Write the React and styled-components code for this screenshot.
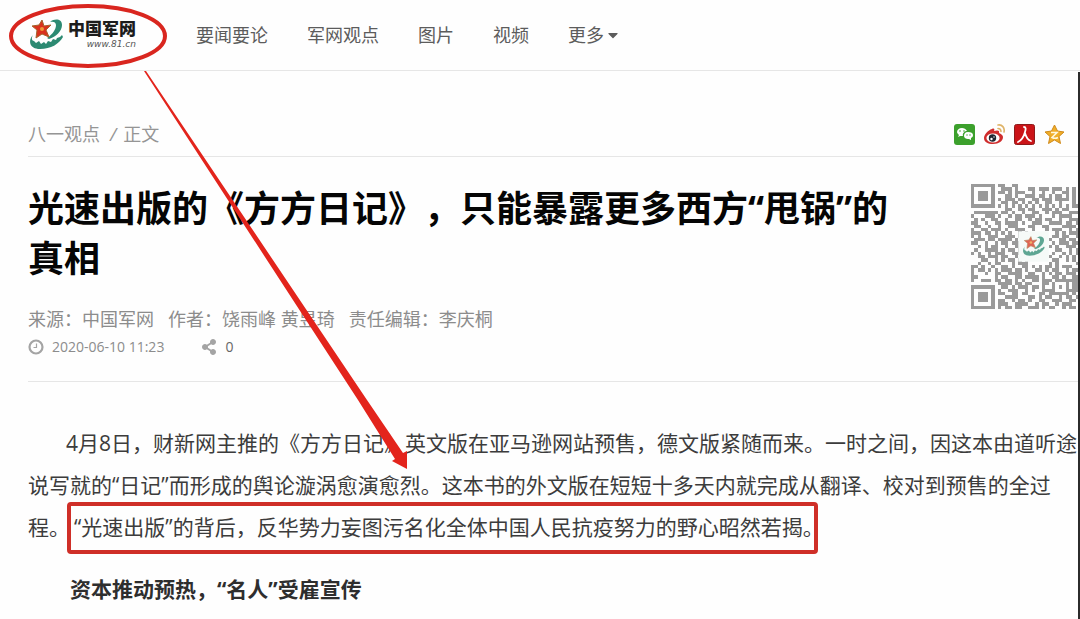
import React from "react";
import styled, { createGlobalStyle } from "styled-components";
import { FaShareAlt, FaCaretDown } from "react-icons/fa";

const GlobalStyle = createGlobalStyle`
    * {
        box-sizing: border-box;
    }
    body {
        margin: 0;
        background: #fefefe;
        color: #3c3c3c;
        font-family: "Open Sans", "Noto Sans CJK SC", sans-serif;
        text-spacing-trim: space-all;
        overflow-x: hidden;
    }
    a {
        color: inherit;
        text-decoration: none;
    }
    svg {
        display: block;
    }
`;

// dark window edge lies over the right side of the page, under the header
const Page = styled.div`
    position: relative;
    min-height: 100vh;
    &::after {
        content: "";
        position: absolute;
        top: 72px;
        right: 0;
        bottom: 0;
        width: 2px;
        background: #2b2b2b;
    }
`;

// HEADER

const Header = styled.header`
    display: flex;
    align-items: center;
    height: 71px;
    padding-left: 28px;
    border-bottom: 1px solid #e6e6e6;
`;

const Logo = styled.a`
    display: flex;
    align-items: center;
    gap: 4px;
    width: 168px;
`;

const LogoText = styled.div`
    display: flex;
    flex-flow: column nowrap;
    align-items: flex-end;
    strong {
        color: #1c1c1c;
        font-size: 17px;
        line-height: 18px;
        font-weight: 900;
    }
    em {
        color: #555;
        font-family: "DejaVu Sans", sans-serif;
        font-size: 9px;
        line-height: 12px;
    }
`;

const Nav = styled.nav`
    display: flex;
    gap: 39px;
    color: #5c5c5c;
    font-size: 18px;
    line-height: 28px;
    white-space: nowrap;
`;

const MoreButton = styled.button`
    display: flex;
    align-items: center;
    gap: 2px;
    padding: 0;
    border: 0;
    background: none;
    color: inherit;
    font: inherit;
    svg {
        width: 14px;
        height: 16px;
    }
`;

// ARTICLE

const Main = styled.main`
    margin-top: 1px;
    padding-left: 28px;
`;

const TopBar = styled.div`
    display: flex;
    align-items: flex-end;
    justify-content: space-between;
    height: 85px;
    padding: 0 15px 8px 0;
    border-bottom: 1px solid #e6e6e6;
`;

const Crumbs = styled.div`
    display: flex;
    gap: 10px;
    color: #959595;
    font-size: 18px;
    line-height: 28px;
    span {
        display: flex;
        gap: 7px;
    }
`;

const ShareList = styled.div`
    display: flex;
    gap: 9px;
    padding-bottom: 3px;
    svg {
        width: 21px;
        height: 21px;
    }
`;

const Intro = styled.section`
    display: flex;
    gap: 60px;
    padding: 27px 0 20px;
    border-bottom: 1px solid #e6e6e6;
`;

const Heading = styled.div`
    flex: 1;
    min-width: 0;
`;

const Title = styled.h1`
    margin: 0;
    color: #050505;
    font-size: 36px;
    line-height: 50px;
    font-weight: bold;
`;

const Meta = styled.div`
    display: flex;
    gap: 14px;
    margin-top: 21px;
    color: #8c8c8c;
    font-size: 18px;
    line-height: 28px;
`;

const Stats = styled.div`
    display: flex;
    align-items: center;
    gap: 37px;
    color: #8c8c8c;
    font-size: 14px;
    line-height: 28px;
    span {
        display: flex;
        align-items: center;
        gap: 8px;
    }
    svg {
        width: 16px;
        height: 16px;
        color: #a4a4a4;
    }
    b {
        color: #666;
        font-weight: normal;
    }
`;

const QrBox = styled.div`
    width: 109px;
    overflow: hidden;
    > svg {
        width: 125px;
        height: 125px;
    }
`;

const Body = styled.article`
    padding-top: 40px;
    font-size: 21px;
    line-height: 42px;
    p {
        margin: 0 0 20px;
        text-indent: 38px;
    }
    h2 {
        margin: 0;
        color: #2e2e2e;
        font-size: 21px;
        font-weight: bold;
        text-indent: 42px;
    }
`;

const Marked = styled.span`
    position: relative;
    padding-left: 4px;
    white-space: nowrap;
    &::after {
        content: "";
        position: absolute;
        inset: -11px 6px -13px -3px;
        border: 4px solid #cf2f28;
        border-radius: 4px;
    }
`;

const Annotation = styled.svg`
    position: absolute;
    top: 0;
    left: 0;
    width: 420px;
    height: 480px;
    pointer-events: none;
`;

const qrRows = [
    "#######.##..##..................######",
    "#.....#..###.#...##.###.###.#.#.....#",
    "#.###.#.##.#.###..#..#..#..##.#.###.#",
    "#.###.#...##.#..###.##.#.##.#.#.###.#",
    "#.###.#.#.###.##..##.###.####.#.###.#",
    "#.....#..##.##.#.#.#..##..#...#.....#",
    "#######.#.#.#.#.#.#.#.#.#.#.#.#######",
    "..........##..##.##..###.#.##........",
    ".#######.##.#..#..##..#.###..###.#.#.",
    "#...###.#..#.##.###.#...#.####..#.##.",
    ".#.#..##..#..##..#.##.##..#..###..#..",
    "##..#..##.####.#..###..####.##.#.##.#",
    ".##..#..#..###...##..##....####.#..#.",
    "#..##.###.#..###..#...#.###..#.##.#.#",
    "###.##.#.#.#..#.#........#.#.###..##.",
    "#.#..###..###.#.........##.##..##.#.#",
    ".###.##.####.#.........#..##.##.#.##.",
    "##..#..#.##.###.........#.###.##.#..#",
    "..#.#.##..#..##........#.#..###..##.#",
    ".#..####.#.##.#..........##..#.#.#.#.",
    "#.#..#.###..###.........#..#.#.#.###.",
    "..##.###.##..#.........#..#.#.#.##..#",
    "...##..#.#.##.#.#.......##..#.#..#.#.",
    "..#..#.##...#.###......#.#.....##.##.",
    "##.#..#..##.#..##.#.#.##.#.###..#..#.",
    "#.##.#.#.###.##.#..##.#.##..#.##.##.#",
    "#...#..##..####..##..#.#.##.###..#...",
    "##.....#.##..##.####.#..##.#..##.###.",
    "#..###.##.##.#.#..##.###.#######.#.#.",
    "........####.##.##...##.#...#.##..##.",
    "#######..##.#.###.##.#..#.#.#.###.#.#",
    "#.....#.#..###..#.#..####...####..#..",
    "#.###.#.##..##.##...##.######.#.##.#.",
    "#.###.#...####...##.#.##..#.##.#..##.",
    "#.###.#.##..#.##.#..##..###..##.#.#..",
    "#.....#.###..####..#.##..#.###..##.#.",
    "#######.#.##.##..###.#.##..#.##.#.##.",
];

const qrPath = qrRows
    .map((row, y) => row.slice(0, 37).split("").map((c, x) => (c === "#" ? `M${x} ${y}h1v1h-1z` : "")).join(""))
    .join("");

const Emblem = () => (
    <>
        <path fill="#2c8a72" d="M22 4c5-4 12-3 12 3 0 6-6 12-13 14l-2-1c6-4 9-9 9-13 0-3-3-4-6-3z" />
        <path fill="#2c8a72" d="M5 17c-5 5-4 14 7 14 11 0 19-5 23-12l-1-2-2 2-3 1-1 2-3-1-2 3-3-1-2 3-2-2-3 2-2-3-3 2-2-2c-2 0-3-3-1-6z" />
        <path fill="#d9321e" stroke="#a5642c" strokeWidth="1" strokeLinejoin="round" d="M14 2l2 6 7-1-5 5 3 7-7-3-6 4 1-8-5-4 7-1z" />
        <circle cx="14" cy="11" r="2" fill="#ee9a38" />
    </>
);

const QrCode = () => (
    <svg viewBox="0 0 37 37" role="img" aria-label="QR">
        <path d={qrPath} fill="#9a9a9a" shapeRendering="crispEdges" />
        <rect x="14" y="14" width="9" height="9" fill="#f6faf8" />
        <svg x="15" y="15" width="7" height="7" viewBox="0 0 36 34" opacity="0.75">
            <Emblem />
        </svg>
    </svg>
);

const Clock = () => (
    <svg viewBox="0 0 16 16" fill="none" stroke="currentColor">
        <circle cx="8" cy="8" r="6.500" strokeWidth="2.200" />
        <path d="M8.500 4.500v4H5.500" strokeWidth="1.200" />
    </svg>
);

const WeChat = () => (
    <svg viewBox="0 0 21 21">
        <rect width="21" height="21" rx="3" fill="#3ca02c" />
        <path fill="#fff" d="M8 4c-3 0-5 2-5 4 0 1 1 2 2 3l-1 2 2-1h3c-1-3 2-5 4-5-1-2-3-3-5-3z" />
        <path fill="#fff" d="M14 8c-3 0-4 2-4 4s2 3 4 3h1l2 1v-2c1-1 2-1 2-3s-2-3-5-3z" />
        <g fill="#3ca02c">
            <circle cx="6" cy="7" r=".8" />
            <circle cx="10" cy="7" r=".8" />
            <circle cx="13" cy="11" r=".7" />
            <circle cx="16" cy="11" r=".7" />
        </g>
    </svg>
);

const Weibo = () => (
    <svg viewBox="0 0 21 21">
        <path fill="#cf2c2c" d="M8 5c2-1 3 0 2 2 3-1 6-1 5 2 2 1 4 2 4 4 0 4-4 7-10 7-5 0-9-2-9-6 0-3 4-8 8-9z" />
        <ellipse cx="9" cy="14" rx="6.600" ry="4.600" fill="#fff" />
        <circle cx="8.500" cy="14" r="3.700" fill="#1e2630" />
        <circle cx="7.500" cy="15" r="1.200" fill="#fff" />
        <circle cx="10" cy="13" r=".7" fill="#fff" />
        <path fill="none" stroke="#dfb469" strokeWidth="1.600" strokeLinecap="round" d="M14 1c4-1 7 3 6 7M14 4.500c2 0 3 1 3 3" />
    </svg>
);

const People = () => (
    <svg viewBox="0 0 21 21">
        <rect x=".5" y=".5" width="20" height="20" rx="2" fill="#cb1418" stroke="#8f1a1a" />
        <path fill="none" stroke="#fff" strokeWidth="1.800" strokeLinecap="round" d="M10 3c2 0 2 2 1 5-1 4-3 8-7 10M11 9c1 4 3 7 6 8" />
    </svg>
);

const Qzone = () => (
    <svg viewBox="0 0 21 21">
        <path fill="#f0ae28" stroke="#cf8a1c" strokeLinejoin="round" d="M10.500 1l3 6 6.500 1-5 4.500 1.500 7-6-3.500-6 3.500 1.500-7L1 8l6.500-1z" />
        <path fill="none" stroke="#fff8dd" strokeWidth="1.600" d="M7 8.500h6l-5 5c2 1 4 1 6 0" />
    </svg>
);

const App = () => {
    return (
        <Page>
            <GlobalStyle />
            <Header>
                <Logo href="#">
                    <svg width="36" height="34" viewBox="0 0 36 34">
                        <Emblem />
                    </svg>
                    <LogoText>
                        <strong>中国军网</strong>
                        <em>www.81.cn</em>
                    </LogoText>
                </Logo>
                <Nav>
                    <a href="#">要闻要论</a>
                    <a href="#">军网观点</a>
                    <a href="#">图片</a>
                    <a href="#">视频</a>
                    <MoreButton type="button">更多<FaCaretDown /></MoreButton>
                </Nav>
            </Header>
            <Main>
                <TopBar>
                    <Crumbs>
                        <a href="#">八一观点</a>
                        <span><i>/</i>正文</span>
                    </Crumbs>
                    <ShareList>
                        <a href="#" aria-label="微信"><WeChat /></a>
                        <a href="#" aria-label="微博"><Weibo /></a>
                        <a href="#" aria-label="人民网"><People /></a>
                        <a href="#" aria-label="QQ空间"><Qzone /></a>
                    </ShareList>
                </TopBar>
                <Intro>
                    <Heading>
                        <Title>光速出版的《方方日记》，只能暴露更多西方“甩锅”的真相</Title>
                        <Meta>
                            <span>来源：中国军网</span>
                            <span>作者：饶雨峰 黄昱琦</span>
                            <span>责任编辑：李庆桐</span>
                        </Meta>
                        <Stats>
                            <span><Clock />2020-06-10 11:23</span>
                            <span><FaShareAlt /><b>0</b></span>
                        </Stats>
                    </Heading>
                    <QrBox>
                        <QrCode />
                    </QrBox>
                </Intro>
                <Body>
                    <p>
                        4月8日，财新网主推的《方方日记》英文版在亚马逊网站预售，德文版紧随而来。一时之间，因这本由道听途说写就的“日记”而形成的舆论漩涡愈演愈烈。这本书的外文版在短短十多天内就完成从翻译、校对到预售的全过程。<Marked>“光速出版”的背后，反华势力妄图污名化全体中国人民抗疫努力的野心昭然若揭。</Marked>
                    </p>
                    <h2>资本推动预热，“名人”受雇宣传</h2>
                </Body>
            </Main>
            <Annotation viewBox="0 0 420 480">
                <ellipse cx="88" cy="36" rx="77" ry="30" fill="none" stroke="#d9261f" strokeWidth="4" />
                <path fill="#e3241c" d="M144 71l2 0L367 400l36 53 4-2v18l-15-8 3-2-37-59z" />
            </Annotation>
        </Page>
    );
};

export default App;
